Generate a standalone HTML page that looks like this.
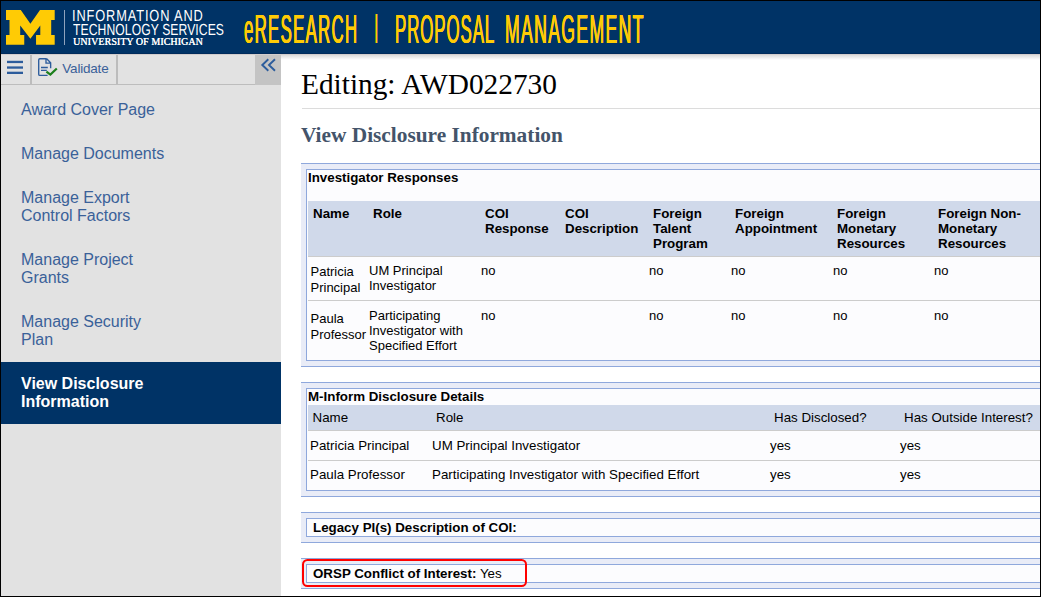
<!DOCTYPE html>
<html lang="en">
<head>
<meta charset="utf-8">
<title>eResearch Proposal Management</title>
<style>
*{box-sizing:border-box;}
html,body{margin:0;padding:0;}
body{width:1041px;height:597px;overflow:hidden;background:#fff;font-family:"Liberation Sans",Arial,sans-serif;font-size:13px;color:#000;position:relative;}
#frame{position:absolute;left:0;top:0;width:1041px;height:597px;border:1px solid #000;z-index:50;pointer-events:none;}
#hdr{position:absolute;left:0;top:0;width:1041px;height:54px;background:#003366;border-bottom:1px solid #002b5b;z-index:5;}
#hl{position:absolute;left:0;top:54px;width:1041px;height:1px;background:#d2cdcd;z-index:6;}
#sh{position:absolute;left:0;top:1px;width:760px;height:5px;background:linear-gradient(#dadada,#fff);}
#hdr svg.m{position:absolute;left:0;top:0;}
#hdr .vline{position:absolute;left:64px;top:10px;width:1px;height:35px;background:#8fa3bd;}
.its{position:absolute;left:73px;color:#fff;white-space:nowrap;transform-origin:0 0;}
.its1{top:9.4px;left:71.8px;font-size:16px;line-height:16px;transform:scaleX(.8);letter-spacing:1.1px;text-rendering:geometricPrecision;}
.its2{top:23.3px;font-size:16px;line-height:16px;transform:scaleX(.76);letter-spacing:.1px;text-rendering:geometricPrecision;}
.its3{top:36px;left:73px;font-family:"Liberation Serif","Times New Roman",serif;font-weight:normal;font-size:10px;line-height:12px;letter-spacing:.06px;text-shadow:.3px 0 0 #fff;}
.ttl{position:absolute;top:6.5px;color:#ffcb05;font-size:40px;line-height:45px;white-space:nowrap;transform-origin:0 0;transform:scaleX(.42);letter-spacing:3.1px;text-shadow:.7px 0 0 #ffcb05,-.7px 0 0 #ffcb05;}
#side{position:absolute;left:1px;top:54px;width:280px;height:543px;background:#e2e2e2;}
#tb{position:absolute;left:0;top:0;width:280px;height:31px;border-bottom:1px solid #bdbdbd;}
#tb .sep{position:absolute;top:1px;width:2px;height:29px;background:#bcbcbc;}
#tb .col{position:absolute;left:254px;top:0;width:26px;height:31px;background:#c4c4c4;}
#tb .val{position:absolute;left:61.3px;top:6.6px;font-size:13.5px;line-height:16px;letter-spacing:-.2px;color:#3a6199;}
#nav{position:absolute;left:0;top:34px;width:280px;margin:0;padding:0;list-style:none;}
#nav li{padding:13px 20px 13px 20px;font-size:16px;line-height:18px;color:#3a6199;}
#nav li.sel{background:#003366;color:#fff;font-weight:bold;}
#main{position:absolute;left:281px;top:54px;width:760px;height:543px;background:#fff;overflow:hidden;}
h1{position:absolute;left:20px;top:14px;margin:0;font-family:"Liberation Serif","Times New Roman",serif;font-weight:normal;font-size:29.33px;line-height:32px;white-space:nowrap;}
.hr{position:absolute;left:21px;top:54px;width:740px;height:1px;background:#dcdcdc;}
h2{position:absolute;left:20px;top:68.5px;margin:0;font-family:"Liberation Serif","Times New Roman",serif;font-weight:bold;font-size:21.33px;line-height:24px;color:#44546a;white-space:nowrap;}
.sec{position:absolute;left:20px;width:760px;background:#e9ecf7;border-top:1px solid #8fa8dc;border-bottom:1px solid #8fa8dc;padding:5px 0 5px 5px;}
.box{border:1px solid #8fa8dc;border-right:0;background:#fcfcfe;height:100%;padding:0 0 0 1px;overflow:hidden;}
.sec .t{display:block;font-weight:bold;font-size:13.33px;line-height:16px;white-space:nowrap;}
table{border-collapse:separate;border-spacing:0;table-layout:fixed;width:760px;font-size:13px;line-height:15px;}
th{background:#d0d9ea;text-align:left;vertical-align:top;font-weight:bold;font-size:13.33px;padding:5px 0 5px 6px;border-bottom:1px solid #cccccc;}
td{vertical-align:top;padding:6px 0 7px 2px;}
th:first-child{padding-left:5px;}
tr.r2 td{border-top:1px solid #cccccc;padding:7px 0 7px 2px;}
#t1 td.n{line-height:16px;padding:6.8px 0 4.2px 2.5px;}
#t1 tr.r2 td.n{padding-top:9.8px;}
#t2 th{font-weight:normal;}
#t2 th:first-child{padding-left:4.5px;}
#t2 td{padding-top:7px;padding-bottom:7px;font-size:13.33px;}
#t2 tr.r2 td{padding-top:6px;padding-bottom:8px;}
.one{font-size:13.33px;line-height:16px;padding:1px 0 0 6px;white-space:nowrap;}
#red{position:absolute;left:21.4px;top:505.4px;width:224.4px;height:28px;border:2.4px solid #ff0000;border-radius:5.5px;}
</style>
</head>
<body>
<div id="hdr">
<svg class="m" width="62" height="54" viewBox="0 0 62 54"><polygon fill="#ffcb05" points="6,10 20.8,10 30.4,23.7 40,10 54.7,10 54.7,20 51.2,20 51.2,35 54.7,35 54.7,44.85 36.05,44.85 36.05,35 40.3,35 40.3,25.5 30.4,38.65 20.2,25.5 20.2,35 24.25,35 24.25,44.85 6,44.85 6,35 9.5,35 9.5,20 6,20"/></svg>
<div class="vline"></div>
<div class="its its1">INFORMATION AND</div>
<div class="its its2">TECHNOLOGY SERVICES</div>
<div class="its its3">UNIVERSITY OF MICHIGAN</div>
<div class="ttl" style="left:243.5px">eRESEARCH</div>
<div class="ttl" style="left:373.9px;clip-path:inset(7.5px 0 8.5px 0);text-shadow:.6px 0 0 #ffcb05;letter-spacing:0">|</div>
<div class="ttl" style="left:394.5px;letter-spacing:2.3px">PROPOSAL</div>
<div class="ttl" style="left:505px;transform:scaleX(.44);letter-spacing:3.1px">MANAGEMENT</div>
</div>

<div id="hl"></div>
<div id="side">
<div id="tb">
<svg width="30" height="30" style="position:absolute;left:0;top:0"><g fill="#2c5c9c"><rect x="6" y="6.8" width="16" height="2.3"/><rect x="6" y="12.4" width="16" height="2.3"/><rect x="6" y="17.7" width="16" height="2.3"/></g></svg>
<div class="sep" style="left:29px"></div>
<svg width="30" height="30" style="position:absolute;left:32px;top:0" fill="none"><path d="M13.7 4.7 H6.9 Q5.7 4.7 5.7 5.9 V20.2 Q5.7 21.4 6.9 21.4 H14.6 M13.7 4.7 L17.65 8.7 V14.2 M13 4.9 V9.15 H17.5" stroke="#2c5c9c" stroke-width="1.35"/><path d="M8 13.5H14.8M8 16.4H13.8" stroke="#2c5c9c" stroke-width="1.3"/><path d="M13.4 17.6 L17.4 20.65 L23.8 14.55" stroke="#1b7f1b" stroke-width="2.2"/></svg>
<div class="val">Validate</div>
<div class="sep" style="left:115px"></div>
<div class="col"><svg width="26" height="31"><path d="M13.3 5.3 l-6 5.7 l6 5.7 M20 5.3 l-6 5.7 l6 5.7" fill="none" stroke="#2c5c9c" stroke-width="1.9"/></svg></div>
</div>
<ul id="nav">
<li>Award Cover Page</li>
<li>Manage Documents</li>
<li>Manage Export<br>Control Factors</li>
<li>Manage Project<br>Grants</li>
<li>Manage Security<br>Plan</li>
<li class="sel">View Disclosure<br>Information</li>
</ul>
</div>

<div id="main">
<div id="sh"></div>
<h1>Editing: AWD022730</h1>
<div class="hr"></div>
<h2>View Disclosure Information</h2>
<div class="sec" style="top:109px;height:204px"><div class="box">
<span class="t" style="height:31px">Investigator Responses</span>
<table id="t1">
<colgroup><col style="width:59px"><col style="width:112px"><col style="width:80px"><col style="width:88px"><col style="width:82px"><col style="width:102px"><col style="width:101px"><col></colgroup>
<tr><th>Name</th><th>Role</th><th>COI<br>Response</th><th>COI<br>Description</th><th>Foreign<br>Talent<br>Program</th><th>Foreign<br>Appointment</th><th>Foreign<br>Monetary<br>Resources</th><th>Foreign Non-<br>Monetary<br>Resources</th></tr>
<tr><td class="n">Patricia<br>Principal</td><td>UM Principal<br>Investigator</td><td>no</td><td></td><td>no</td><td>no</td><td>no</td><td>no</td></tr>
<tr class="r2"><td class="n">Paula<br>Professor</td><td>Participating<br>Investigator with<br>Specified Effort</td><td>no</td><td></td><td>no</td><td>no</td><td>no</td><td>no</td></tr>
</table>
</div></div>

<div class="sec" style="top:328px;height:115px"><div class="box">
<span class="t">M-Inform Disclosure Details</span>
<table id="t2">
<colgroup><col style="width:122px"><col style="width:338px"><col style="width:130px"><col></colgroup>
<tr><th>Name</th><th>Role</th><th>Has Disclosed?</th><th>Has Outside Interest?</th></tr>
<tr><td class="n">Patricia Principal</td><td>UM Principal Investigator</td><td>yes</td><td>yes</td></tr>
<tr class="r2"><td class="n">Paula Professor</td><td>Participating Investigator with Specified Effort</td><td>yes</td><td>yes</td></tr>
</table>
</div></div>

<div class="sec" style="top:458px;height:31px"><div class="box one"><b>Legacy PI(s) Description of COI:</b></div></div>

<div class="sec" style="top:504px;height:31px"><div class="box one"><b>ORSP Conflict of Interest:</b> Yes</div></div>
<div id="red"></div>
</div>
<div id="frame"></div>
</body>
</html>
